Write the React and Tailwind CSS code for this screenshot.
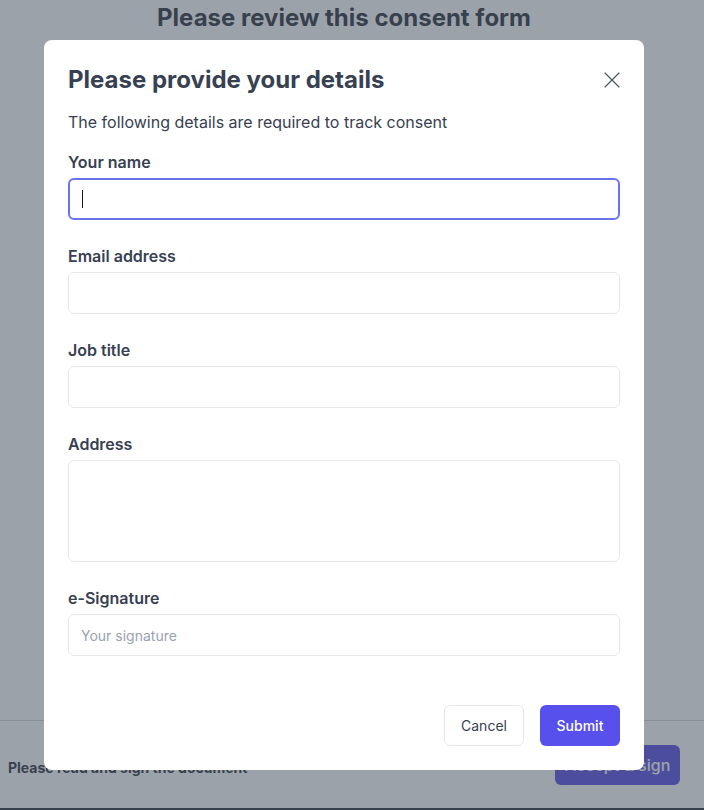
import { X } from "lucide-react";

const Field = ({ label, children }) => (
  <div className="flex flex-col gap-1">
    <label className="text-base font-semibold leading-6 text-[#374151]">
      {label}
    </label>
    {children}
  </div>
);

const inputClass =
  "w-full h-[42px] px-3 rounded-md border border-gray-200 bg-white text-sm text-gray-800 placeholder:text-gray-400 outline-none";

const App = () => {
  return (
    <div
      className="relative h-[810px] w-full overflow-hidden bg-white"
      style={{ fontFamily: "Inter, 'Noto Sans', sans-serif" }}
    >
      {/* Page behind the dialog */}
      <div className="flex h-full flex-col">
        <h1 className="w-[688px] pt-[2px] text-center text-2xl font-bold leading-8 text-[#1f2937]">
          Please review this consent form
        </h1>
        <div className="flex-1" />
        <div className="flex h-[88px] items-center justify-between border-t border-gray-300 pl-2 pr-6">
          <p className="mt-[6px] text-sm font-bold text-[#1f2937]">
            Please read and sign the document
          </p>
          <button className="h-10 w-[125px] rounded-md bg-[#4f46e5] text-base font-medium text-white">
            Accept &amp; sign
          </button>
        </div>
        <div className="h-[2px] bg-[#1f2937]" />
      </div>

      {/* Overlay + dialog */}
      <div className="absolute inset-0 bg-[rgba(75,85,99,0.55)]">
        <div className="flex w-[688px] justify-center pt-10">
          <div className="flex h-[730px] w-[600px] flex-col rounded-lg bg-white px-6 pt-6 pb-6">
            <div className="flex items-center justify-between">
              <h2 className="text-2xl font-bold leading-8 text-[#374151]">
                Please provide your details
              </h2>
              <button className="mr-[-6px] text-gray-600">
                <X size={28} strokeWidth={1} />
              </button>
            </div>
            <p className="mt-[14px] text-base leading-6 text-[#374151]">
              The following details are required to track consent
            </p>

            <div className="mt-4 flex flex-col gap-6">
              <Field label="Your name">
                <div className="flex h-[42px] w-full items-center rounded-md border-2 border-[#6b72f0] px-3">
                  <span className="h-[18px] w-px bg-gray-900" />
                </div>
              </Field>
              <Field label="Email address">
                <input className={inputClass} />
              </Field>
              <Field label="Job title">
                <input className={inputClass} />
              </Field>
              <Field label="Address">
                <textarea className="h-[102px] w-full resize-none rounded-md border border-gray-200 px-3 py-2 text-sm outline-none" />
              </Field>
              <Field label="e-Signature">
                <input className={inputClass} placeholder="Your signature" />
              </Field>
            </div>

            <div className="mt-auto flex justify-end gap-4">
              <button className="h-[41px] w-[80px] rounded-md border border-gray-200 bg-white text-sm font-normal text-[#374151]">
                Cancel
              </button>
              <button className="h-[41px] w-[80px] rounded-md bg-[#5850ec] text-sm font-medium text-white">
                Submit
              </button>
            </div>
          </div>
        </div>
      </div>
    </div>
  );
};

export default App;
